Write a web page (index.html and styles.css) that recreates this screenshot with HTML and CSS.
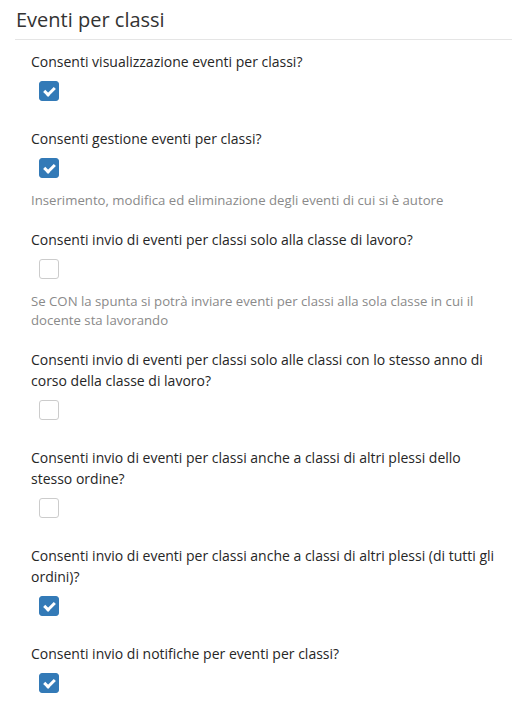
FILE: index.html
```html
<!DOCTYPE html>
<html lang="it">
<head>
    <meta charset="UTF-8">
    <meta name="viewport" content="width=device-width, initial-scale=1.0">
    <title>Eventi per classi</title>
    <link rel="stylesheet" href="styles.css">
</head>
<body>
    <div class="panel">
        <h3 class="section-title">Eventi per classi</h3>

        <div class="option">
            <label class="option-label">Consenti visualizzazione eventi per classi?</label>
            <span class="check checked"></span>
        </div>

        <div class="option">
            <label class="option-label">Consenti gestione eventi per classi?</label>
            <span class="check checked"></span>
            <p class="help">Inserimento, modifica ed eliminazione degli eventi di cui si è autore</p>
        </div>

        <div class="option">
            <label class="option-label">Consenti invio di eventi per classi solo alla classe di lavoro?</label>
            <span class="check"></span>
            <p class="help">Se CON la spunta si potrà inviare eventi per classi alla sola classe in cui il docente sta lavorando</p>
        </div>

        <div class="option">
            <label class="option-label">Consenti invio di eventi per classi solo alle classi con lo stesso anno di corso della classe di lavoro?</label>
            <span class="check"></span>
        </div>

        <div class="option">
            <label class="option-label">Consenti invio di eventi per classi anche a classi di altri plessi dello stesso ordine?</label>
            <span class="check"></span>
        </div>

        <div class="option">
            <label class="option-label">Consenti invio di eventi per classi anche a classi di altri plessi (di tutti gli ordini)?</label>
            <span class="check checked"></span>
        </div>

        <div class="option">
            <label class="option-label">Consenti invio di notifiche per eventi per classi?</label>
            <span class="check checked"></span>
        </div>
    </div>
</body>
</html>
```

FILE: styles.css
```css
body {
    margin: 0;
    font-family: "Open Sans", Arial, sans-serif;
    color: #333;
    background: #fff;
}
.panel {
    padding: 0 11px 0 15px;
}
.section-title {
    margin: 0 0 11px 0;
    padding: 8px 0 7px 1px;
    font-size: 20px;
    font-weight: 400;
    line-height: 24px;
    border-bottom: 1px solid #e5e5e5;
}
.option {
    padding: 0 16px;
    margin-bottom: 27px;
}
.option-label {
    display: block;
    font-size: 14px;
    font-weight: 500;
    line-height: 21px;
    margin-bottom: 9px;
    color: #262626;
}
.check {
    display: block;
    box-sizing: border-box;
    width: 20px;
    height: 20px;
    margin-left: 8px;
    border: 1px solid #ccc;
    border-radius: 3px;
    background: #fff;
    position: relative;
}
.check.checked {
    background: #337ab7;
    border-color: #337ab7;
}
.check.checked::after {
    content: "";
    position: absolute;
    left: 6px;
    top: 3px;
    width: 4px;
    height: 8px;
    border: solid #fff;
    border-width: 0 3px 3px 0;
    transform: rotate(45deg);
}
.help {
    margin: 13px 0 -8px 0;
    font-size: 13.2px;
    line-height: 19px;
    color: #8a8a8a;
}
```
